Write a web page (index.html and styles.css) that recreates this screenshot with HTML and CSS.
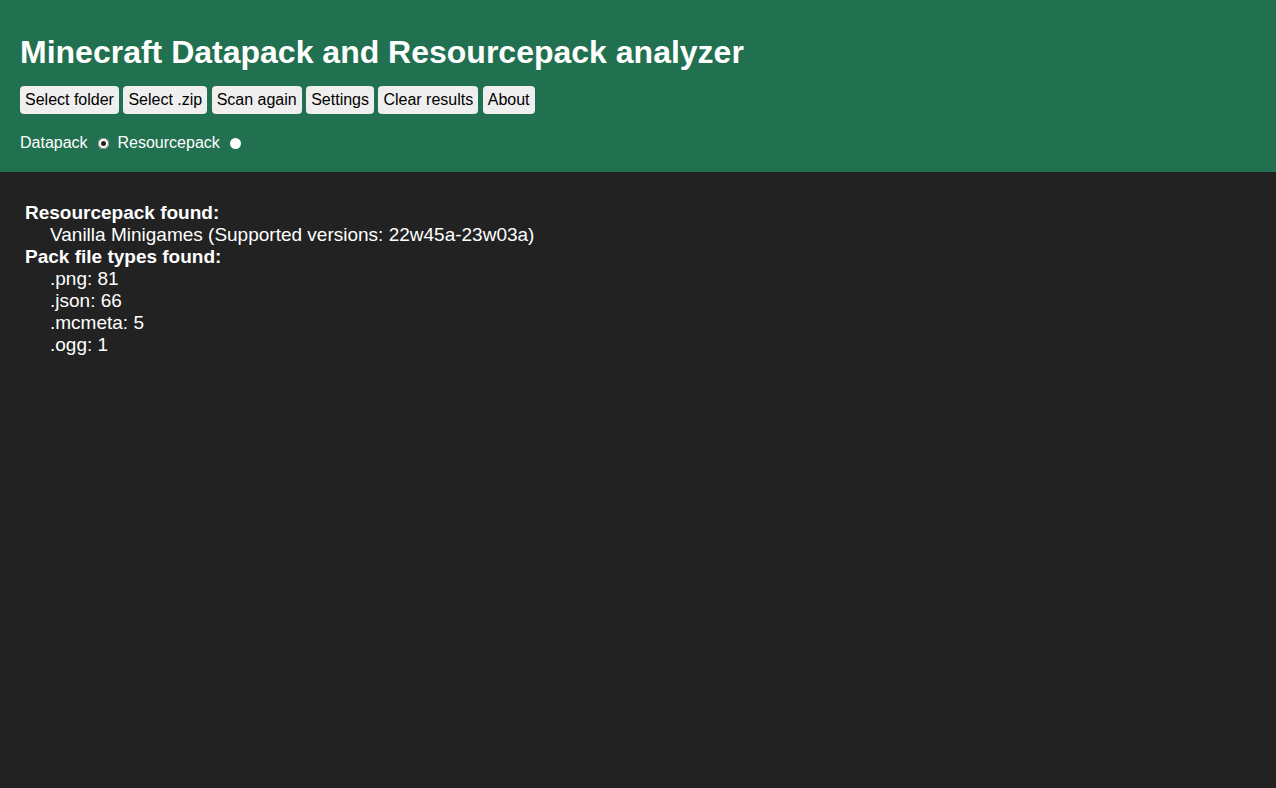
FILE: index.html
```html
<!DOCTYPE html>
<html>
<head>
<meta charset="utf-8">
<link rel="stylesheet" href="styles.css">
</head>
<body>
<header class="header">
  <h1 class="title">Minecraft Datapack and Resourcepack analyzer</h1>
  <div class="buttons">
    <button class="btn">Select folder</button>
    <button class="btn">Select .zip</button>
    <button class="btn">Scan again</button>
    <button class="btn">Settings</button>
    <button class="btn">Clear results</button>
    <button class="btn">About</button>
  </div>
  <div class="modes">
    <label>Datapack <input type="radio" name="mode" class="radio" checked></label>
    <label>Resourcepack <input type="radio" name="mode" class="radio"></label>
  </div>
</header>
<main class="results">
  <div class="heading">Resourcepack found:</div>
  <div class="item">Vanilla Minigames (Supported versions: 22w45a-23w03a)</div>
  <div class="heading">Pack file types found:</div>
  <div class="item">.png: 81</div>
  <div class="item">.json: 66</div>
  <div class="item">.mcmeta: 5</div>
  <div class="item">.ogg: 1</div>
</main>
</body>
</html>
```
FILE: styles.css
```css
html, body {
  margin: 0;
  background: #222222;
  font-family: "Liberation Sans", Arial, sans-serif;
  color: #ffffff;
  min-height: 100%;
}
.header {
  background: #21704f;
  padding: 22px 20px 19px;
}
.title {
  margin: 12px 0 15px;
  font-size: 32px;
  font-weight: bold;
  line-height: 37px;
}
.btn {
  font-family: "Liberation Sans", Arial, sans-serif;
  font-size: 16px;
  color: #000;
  background: #efefef;
  border: none;
  border-radius: 4px;
  padding: 4px 5px;
  height: 28px;
  margin: 0;
}
.modes {
  margin-top: 19px;
  font-size: 16px;
  line-height: 20px;
}
.radio {
  appearance: none;
  -webkit-appearance: none;
  width: 11px;
  height: 11px;
  border-radius: 50%;
  background: #fff;
  margin: 0 4px 0 6px;
  vertical-align: -1px;
  position: relative;
}
.radio:checked {
  box-shadow: inset 0 0 0 1px #8a8a8a;
}
.radio:checked::after {
  content: "";
  position: absolute;
  left: 3px;
  top: 3px;
  width: 5px;
  height: 5px;
  border-radius: 50%;
  background: #222;
}
.results {
  padding: 30px 25px;
  font-size: 19px;
  line-height: 22px;
}
.heading {
  font-weight: bold;
}
.item {
  padding-left: 25px;
}
```
